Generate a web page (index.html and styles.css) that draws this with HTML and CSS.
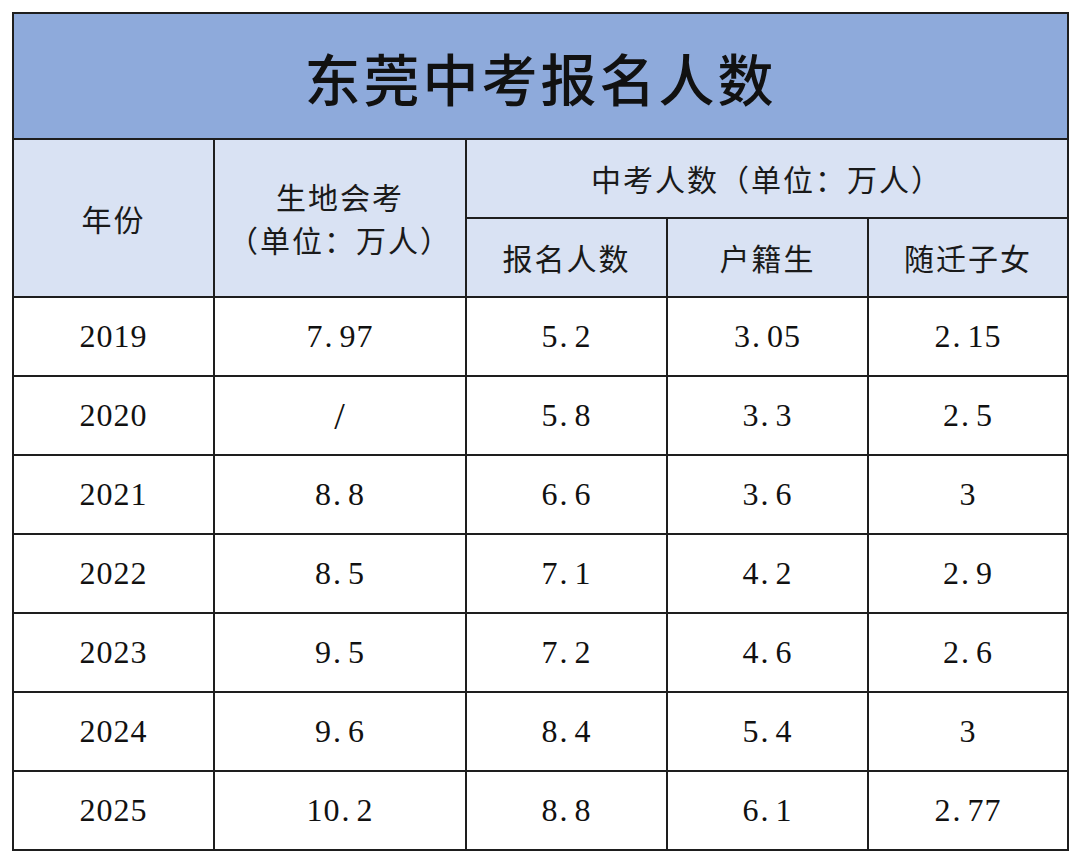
FILE: index.html
```html
<!DOCTYPE html>
<html lang="zh-CN">
<head>
<meta charset="utf-8">
<title>东莞中考报名人数</title>
<link rel="stylesheet" href="styles.css">
</head>
<body>
<table class="sheet">
  <colgroup>
    <col class="c-year">
    <col class="c-geo">
    <col class="c-n">
    <col class="c-n">
    <col class="c-last">
  </colgroup>
  <thead>
    <tr class="title-row"><th colspan="5" class="title">东莞中考报名人数</th></tr>
    <tr class="head-row">
      <th rowspan="2">年份</th>
      <th rowspan="2" class="two-line">生地会考<br>（单位：万人）</th>
      <th colspan="3">中考人数（单位：万人）</th>
    </tr>
    <tr class="head-row">
      <th>报名人数</th>
      <th>户籍生</th>
      <th>随迁子女</th>
    </tr>
  </thead>
  <tbody>
    <tr><td>2019</td><td>7<span class="d">.</span>97</td><td>5<span class="d">.</span>2</td><td>3<span class="d">.</span>05</td><td>2<span class="d">.</span>15</td></tr>
    <tr><td>2020</td><td class="slash">/</td><td>5<span class="d">.</span>8</td><td>3<span class="d">.</span>3</td><td>2<span class="d">.</span>5</td></tr>
    <tr><td>2021</td><td>8<span class="d">.</span>8</td><td>6<span class="d">.</span>6</td><td>3<span class="d">.</span>6</td><td>3</td></tr>
    <tr><td>2022</td><td>8<span class="d">.</span>5</td><td>7<span class="d">.</span>1</td><td>4<span class="d">.</span>2</td><td>2<span class="d">.</span>9</td></tr>
    <tr><td>2023</td><td>9<span class="d">.</span>5</td><td>7<span class="d">.</span>2</td><td>4<span class="d">.</span>6</td><td>2<span class="d">.</span>6</td></tr>
    <tr><td>2024</td><td>9<span class="d">.</span>6</td><td>8<span class="d">.</span>4</td><td>5<span class="d">.</span>4</td><td>3</td></tr>
    <tr><td>2025</td><td>10<span class="d">.</span>2</td><td>8<span class="d">.</span>8</td><td>6<span class="d">.</span>1</td><td>2<span class="d">.</span>77</td></tr>
  </tbody>
</table>
</body>
</html>
```

FILE: styles.css
```css
html, body {
  margin: 0;
  padding: 0;
  background: #ffffff;
}

body {
  padding: 12px 0 0 12px;
  font-family: "Liberation Serif", "Noto Sans CJK SC", serif;
  color: #111111;
}

.sheet {
  border-collapse: collapse;
  table-layout: fixed;
  width: 1055px;
  border: 2px solid #1e1e1e;
}

.c-year { width: 201px; }
.c-geo { width: 252px; }
.c-n { width: 201px; }
.c-last { width: 200px; }

.sheet th,
.sheet td {
  border: 2px solid #1e1e1e;
  padding: 0;
  text-align: center;
  vertical-align: middle;
}

.title-row { height: 126px; }

.title {
  background: #8eaadb;
  font-family: "Noto Sans CJK SC", sans-serif;
  font-weight: 500;
  font-size: 56px;
  letter-spacing: 3px;
  padding-top: 10px;
  color: #111111;
}

.head-row { height: 79px; }

.head-row th {
  background: #d9e2f3;
  font-family: "Noto Sans CJK SC", sans-serif;
  font-weight: 400;
  font-size: 30px;
  line-height: 43px;
  letter-spacing: 2px;
  color: #1a1a1a;
}

tbody tr { height: 79px; }

tbody td {
  font-family: "Liberation Serif", serif;
  font-size: 32px;
  letter-spacing: 1px;
  padding-top: 9px;
  padding-left: 1px;
  color: #111111;
}

.d {
  display: inline-block;
  width: 15px;
  text-align: left;
  padding-left: 1px;
}

.slash {
  font-size: 38px;
}
```
